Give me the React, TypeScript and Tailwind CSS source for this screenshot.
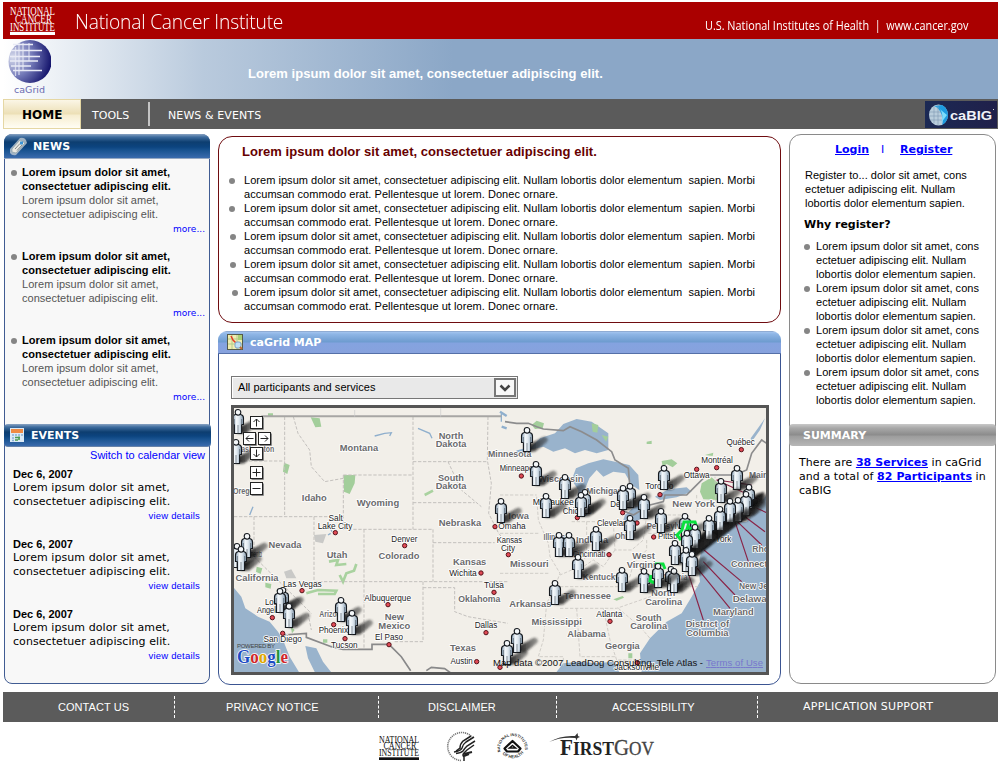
import type { ReactNode } from 'react';

const ARIAL = "font-['Liberation_Sans',sans-serif]";
const VERDANA = "font-['DejaVu_Sans',sans-serif]";

function Bullet({ className = '' }: { className?: string }) {
  return <span className={`block size-[6px] shrink-0 rounded-full bg-[#858585] ${className}`} />;
}

function NciMark({ color, className }: { color: string; className: string }) {
  return (
    <svg className={`overflow-visible ${className}`} viewBox="0 0 45 28" preserveAspectRatio="none" fill={color}>
      <g fontFamily="Liberation Serif, serif" fontSize="12.500">
        <text x="0" y="8.500" textLength="45" lengthAdjust="spacingAndGlyphs">NATIONAL</text>
        <text x="5" y="16.200" textLength="37" lengthAdjust="spacingAndGlyphs">CANCER</text>
        <text x="0" y="24" textLength="45" lengthAdjust="spacingAndGlyphs">INSTITUTE</text>
      </g>
      <rect x="0" y="25" width="45" height="3" />
    </svg>
  );
}

function Header() {
  return (
    <header className="flex h-[37px] items-center bg-[#aa0000] text-white">
      <NciMark color="#fff" className="ml-[7px] h-[29px] w-[45px]" />
      <div className="mt-[2px] ml-5 w-[400px] origin-left scale-x-[0.96] font-['Open_Sans',sans-serif] text-[20px] leading-[36px] font-light tracking-[-0.2px]">
        National Cancer Institute
      </div>
      <div className="mt-[10px] ml-[230px] origin-left scale-x-[0.903] font-['Open_Sans',sans-serif] text-[12px] leading-[18px] whitespace-pre">
        U.S. National Institutes of Health  |  www.cancer.gov
      </div>
    </header>
  );
}

function GridLogo() {
  return (
    <svg className="h-[60px] w-[48px]" viewBox="0 0 48 60">
      <defs>
        <radialGradient id="globe" cx=".1" cy=".4" r=".9">
          <stop offset="0" stopColor="#d5daeb" />
          <stop offset=".5" stopColor="#757bb9" />
          <stop offset="1" stopColor="#14146c" />
        </radialGradient>
      </defs>
      <circle cx="27" cy="22.500" r="21.500" fill="url(#globe)" />
      <g stroke="#e9ebf6" strokeWidth="1.300">
        <path d="M10 5.500H30M8 11.500H39M7 17.500H37M7 22H35M8 27H28M10 31.500H39" />
        <path d="M12.500 8V37M16 4V36M20 4V31M26 4V22" opacity=".75" />
      </g>
      <text x="11" y="54" textLength="31" fontFamily="DejaVu Sans, sans-serif" fontSize="9.500" fill="#6a6bb0">caGrid</text>
    </svg>
  );
}

function Banner() {
  return (
    <div className="flex h-[60px] bg-[linear-gradient(90deg,#fff_0,#b9cadd_200px,#8ba7c7_450px)]">
      <GridLogo />
      <div className={`mt-[26px] ml-[197px] ${ARIAL} text-[13px] leading-[18px] font-bold tracking-[0.04px] whitespace-nowrap text-white`}>
        Lorem ipsum dolor sit amet, consectetuer adipiscing elit.
      </div>
    </div>
  );
}

function CaBig() {
  return (
    <svg className="mt-[2px] mr-px ml-auto h-[27px] w-[72px]" viewBox="0 0 72 27">
      <defs>
        <linearGradient id="cb"><stop offset="0" stopColor="#1b2954" /><stop offset="1" stopColor="#20204a" /></linearGradient>
      </defs>
      <rect width="72" height="27" fill="url(#cb)" />
      <ellipse cx="13.500" cy="14" rx="9.500" ry="10.500" fill="#b9cddc" />
      <path d="M9 5C15 7 20 17 17 24C25 20 25 8 17 4Z" fill="#1e9be0" />
      <path d="M11 5C17 8 19 15 16 22L22 14Z" fill="#7ddcfa" />
      <path d="M4 11H16M4 15H17M5 19H17M9 6V22M13 4V24" stroke="#7e99b2" strokeWidth=".6" fill="none" />
      <text x="25" y="18.500" textLength="42" lengthAdjust="spacingAndGlyphs" fontFamily="Liberation Sans, sans-serif" fontWeight="bold" fontSize="13" fill="#f0f2f8">caBIG</text>
      <rect x="68" y="8" width="1" height="1" fill="#ddd" />
    </svg>
  );
}

function Nav() {
  return (
    <nav className={`flex h-[30px] bg-[#5b5b5b] ${VERDANA} text-[11px] leading-[33px] text-white`}>
      <div className="w-[78px] border border-[#e5d7a4] bg-[linear-gradient(180deg,#fbf6e6_0,#ecdfb5_14px,#f6edcf_15px,#fffdf4_28px)] pl-[18px] text-[12px] leading-[30px] font-bold text-black">
        HOME
      </div>
      <div className="w-[67px] pl-[11px]">TOOLS</div>
      <div className="mt-[3px] h-[24px] w-[2px] bg-[#c4c4c4]" />
      <div className="pl-[18px] tracking-[0.1px] whitespace-nowrap">NEWS &amp; EVENTS</div>
      <CaBig />
    </nav>
  );
}

function NewsItem() {
  return (
    <div className="mb-[13px]">
      <div className="flex">
        <Bullet className="mt-[5px] mr-[5px]" />
        <div className="tracking-[0.03px] whitespace-nowrap text-[#555]">
          <b className="text-black">
            Lorem ipsum dolor sit amet,
            <br />
            consectetuer adipiscing elit.
          </b>
          <br />
          Lorem ipsum dolor sit amet,
          <br />
          consectetuer adipiscing elit.
        </div>
      </div>
      <div className={`mt-px pr-[4px] text-right ${VERDANA} text-[9px] leading-[14px] text-[#00f]`}>more...</div>
    </div>
  );
}

function EventItem() {
  return (
    <div className="mb-[14px] pr-[9px] pl-2">
      <b className={ARIAL}>Dec 6, 2007</b>
      <div className={`${VERDANA} tracking-[0.07px] whitespace-nowrap`}>
        Lorem ipsum dolor sit amet,
        <br />
        consectetuer adipiscing elit.
      </div>
      <div className="text-right text-[9.5px] tracking-[0.2px] text-[#00f]">view details</div>
    </div>
  );
}

function LeftColumn() {
  return (
    <aside className={`mt-[5px] h-[550px] w-[206px] rounded-[8px] border border-[#415c93] bg-[#f8f8f8] ${ARIAL} text-[11px] leading-[14px] text-black`}>
      <h2 className={`-mx-px -mt-px flex h-[25px] items-center rounded-t-[8px] border-b border-[#97a9c2] bg-[linear-gradient(180deg,#8aa4c3_0,#3f6d9f_3px,#0d3e70_8px,#0c447f_13px,#18528f_16px,#3a6bad_24px)] ${VERDANA} font-bold text-white`}>
        <svg className="ml-[5px] size-[19px]" viewBox="0 0 19 19">
          <path d="M1 12L11 1Q15 0 17 3L18 6L7 18Q3 19 1 16Z" fill="#c0cbd2" opacity=".8" />
          <path d="M3 12L11 3L16 6L7 16L3 15Z" fill="#ebe9e2" stroke="#8ba0a8" strokeWidth=".7" />
          <path d="M6 12L11 6.500M8 13.500L13 8" stroke="#858c8c" />
          <rect x="11" y="4.500" width="3" height="3" fill="#3c94d6" />
        </svg>
        <span className="mt-px ml-[5px] tracking-[0.1px]">NEWS</span>
      </h2>
      <div className="h-[265px] pt-[6px] pl-[6px]">
        <NewsItem />
        <NewsItem />
        <NewsItem />
      </div>
      <h2 className={`-mr-[2px] -ml-px flex h-[23px] items-center rounded-[4px] border-b border-[#6682a9] bg-[linear-gradient(180deg,#8aa4c3_0,#3f6d9f_3px,#0d3e70_8px,#0c447f_12px,#18528f_15px,#3a6bad_22px)] ${VERDANA} font-bold text-white`}>
        <svg className="ml-[6px] size-[14px]" viewBox="0 0 14 14">
          <rect width="14" height="14" fill="#dceaf6" />
          <rect x="1" y="1" width="12" height="4" fill="#ef8b43" />
          <path d="M2 7H4M5 7H7M8 7H10M11 7H13M2 10H4M2 12.500H4" stroke="#8ab1d3" strokeWidth="1.500" />
          <path d="M5 9.500H10M5 12H8M9 8.500V12" stroke="#4b9c4f" strokeWidth="1.600" />
        </svg>
        <span className="mt-px ml-[7px]">EVENTS</span>
      </h2>
      <div className="mt-[1px] pr-[4px] text-right text-[#00f]">Switch to calendar view</div>
      <div className="pt-[5px]">
        <EventItem />
        <EventItem />
        <EventItem />
      </div>
    </aside>
  );
}

const introOffsets = ['ml-[10px]', 'ml-[10px]', 'ml-[11px]', 'ml-[11px]', 'ml-[13px]'];
const introGaps = ['mr-[9px]', 'mr-[9px]', 'mr-[8px]', 'mr-[8px]', 'mr-[6px]'];

function Intro() {
  return (
    <section className="h-[187px] rounded-[14px] border border-[#6f0c10]">
      <h1 className="pt-[6px] pl-[23px] text-[13px] leading-[18px] font-bold tracking-[0.04px] text-[#660000]">
        Lorem ipsum dolor sit amet, consectetuer adipiscing elit.
      </h1>
      <ul className="mt-[12px] text-[11px] leading-[14px] tracking-[0.04px]">
        {introOffsets.map((offset, i) => (
          <li key={i} className="flex whitespace-pre">
            <Bullet className={`mt-[5px] ${offset} ${introGaps[i]}`} />
            <span>
              Lorem ipsum dolor sit amet, consectetuer adipiscing elit. Nullam lobortis dolor elementum{'  '}sapien. Morbi
              <br />
              accumsan commodo erat. Pellentesque ut lorem. Donec ornare.
            </span>
          </li>
        ))}
      </ul>
    </section>
  );
}

const people: [number, number][] = [
  [238, 409], [236, 439], [237, 543], [247, 533], [241, 546], [283, 587], [280, 588], [289, 603],
  [341, 597], [352, 610], [501, 498], [527, 427], [536, 461], [565, 474], [546, 493], [585, 489],
  [581, 492], [630, 483], [623, 485], [644, 494], [664, 465], [661, 508], [630, 515], [596, 526],
  [559, 532], [569, 532], [578, 554], [555, 580], [622, 567], [644, 568], [671, 566], [674, 568],
  [675, 540], [737, 465], [721, 478], [749, 484], [746, 491], [738, 497], [730, 498],
  [720, 506], [709, 515], [685, 513], [517, 628], [507, 640],
];
const frontPeople: [number, number][] = [[695, 524], [687, 530], [658, 563], [686, 547], [692, 551]];

function Person({ x, y }: { x: number; y: number }) {
  return (
    <g transform={`translate(${x} ${y})`}>
      <path d="M-1 24.500H8L15 19L21 14Q21 9 16 10L11 13L3 17Z" fill="url(#shade)" filter="url(#soft)" />
      <path d="M-2.500 5.500Q-5.500 6-5.500 9V15.500H-3.600V24.500H3.600V15.500H5.500V9Q5.500 6 2.500 5.500Z" fill="url(#body)" stroke="#15191e" strokeWidth="1.100" />
      <circle cx="0" cy="3.300" r="2.800" fill="#f4f7f9" stroke="#15191e" strokeWidth="1.100" />
      <path d="M0 16V24.500M-3.600 10V16M3.600 10V16" stroke="#56626d" strokeWidth=".7" />
    </g>
  );
}

type Label = [number, number, string, number?];

const westStates: Label[] = [
  [393, 152, 'Montana', 115], [669, 116, 'North', 74], [669, 142, 'Dakota', 92], [669, 242, 'South', 78],
  [669, 268, 'Dakota', 92], [259, 304, 'Idaho', 75], [450, 318, 'Wyoming', 127], [696, 378, 'Nebraska', 127],
  [171, 443, 'Nevada', 99], [327, 473, 'Utah', 62], [513, 477, 'Colorado', 123], [725, 494, 'Kansas', 100],
  [87, 543, 'California', 129], [754, 607, 'Oklahoma', 126], [499, 660, 'New', 58], [499, 686, 'Mexico', 96],
  [705, 752, 'Texas', 78], [312, 651, 'Arizona', 76], [80, 157, 'Washington', 118], [53, 283, 'Oregon', 76],
];
const westCities: Label[] = [
  [323, 363, 'Salt', 43], [321, 387, 'Lake City', 104], [529, 426, 'Denver', 78], [705, 527, 'Wichita', 83],
  [798, 563, 'Tulsa', 60], [223, 560, 'Las Vegas', 116], [479, 602, 'Albuquerque', 140], [316, 700, 'Phoenix', 88],
  [349, 745, 'Tucson', 80], [483, 721, 'El Paso', 84], [774, 684, 'Dallas', 68], [701, 792, 'Austin', 67],
  [164, 726, 'San Diego', 115], [130, 615, 'Los', 38], [127, 640, 'Angeles', 80], [67, 470, 'Sacramento', 70],
];
const eastStates: Label[] = [
  [29, 170, 'Minnesota', 130], [182, 247, 'Wisconsin', 135], [314, 282, 'Michigan', 110], [56, 358, 'Iowa', 62],
  [163, 420, 'Illinois', 65], [276, 428, 'Indiana', 96], [370, 418, 'Ohio', 52], [581, 320, 'New York', 128],
  [515, 388, 'Pennsylvania', 150], [88, 502, 'Missouri', 116], [431, 477, 'West', 68], [431, 503, 'Virginia', 102],
  [304, 541, 'Kentucky', 112], [527, 541, 'Virginia', 70], [262, 597, 'Tennessee', 142], [490, 589, 'North', 72],
  [491, 615, 'Carolina', 111], [91, 622, 'Arkansas', 126], [170, 674, 'Mississippi', 151], [260, 711, 'Alabama', 116],
  [367, 747, 'Georgia', 104], [446, 662, 'South', 77], [446, 688, 'Carolina', 111], [783, 233, 'Maine', 72],
  [797, 456, 'Rhode', 80], [772, 501, 'Connecticut', 158], [786, 568, 'New Jersey', 138], [763, 606, 'Delaware', 130],
  [700, 644, 'Maryland', 122], [622, 682, 'District of', 130], [622, 709, 'Columbia', 127],
];
const eastCities: Label[] = [
  [722, 134, 'Québec', 85], [651, 189, 'Montréal', 95], [590, 234, 'Ottawa', 78], [478, 267, 'Toronto', 84],
  [60, 212, 'Minneapolis', 122], [160, 316, 'Milwaukee', 123], [231, 341, 'Chicago', 86], [366, 322, 'Detroit', 70],
  [343, 377, 'Cleveland', 104], [527, 417, 'Pittsburgh', 106], [36, 387, 'Omaha', 82], [28, 429, 'Kansas', 76],
  [24, 453, 'City', 42], [267, 471, 'Cincinnati', 98], [328, 650, 'Atlanta', 78], [670, 426, 'York', 48],
  [410, 810, 'Jacksonville', 135],
];
const westDots = [[322, 398], [530, 437], [759, 519], [798, 577], [222, 572], [480, 614], [317, 674], [351, 716], [483, 734], [774, 698], [746, 785], [164, 700], [133, 653], [801, 380], [816, 802]];
const eastDots = [[724, 149], [650, 203], [590, 208], [480, 284], [64, 228], [232, 353], [368, 338], [411, 369], [461, 411], [25, 464], [327, 464], [330, 664], [412, 788]];

function Labels({ items, state }: { items: Label[]; state?: boolean }) {
  return (
    <g
      fontFamily="Liberation Sans, sans-serif"
      fontSize={state ? 28 : 25}
      fontWeight={state ? 'bold' : 'normal'}
      fill={state ? '#6a6a6c' : '#1c1c1c'}
      stroke="#fff"
      strokeWidth="5"
      strokeLinejoin="round"
      paintOrder="stroke"
      textAnchor="middle"
    >
      {items.map(([x, y, text, w], i) => (
        <text key={i} x={x} y={y} textLength={w} lengthAdjust="spacingAndGlyphs">{text}</text>
      ))}
    </g>
  );
}

function Dots({ at }: { at: number[][] }) {
  return (
    <g fill="#e04a55" stroke="#551018" strokeWidth="3">
      {at.map(([x, y], i) => <circle key={i} cx={x} cy={y} r="6.500" />)}
    </g>
  );
}

function MapControl({ x, y, d }: { x: number; y: number; d: string }) {
  return (
    <g transform={`translate(${x} ${y})`} fill="none">
      <rect x=".5" y=".5" width="12" height="12" fill="#fff" stroke="#222" />
      <path d="M1.500 13.500H13.500V1.500" stroke="#888" />
      <path d={d} stroke="#222" />
    </g>
  );
}

function UsMap() {
  return (
    <svg className="h-[270px] w-[538px]" viewBox="231 405 538 270">
      <defs>
        <linearGradient id="body">
          <stop offset="0" stopColor="#7f97ad" /><stop offset=".35" stopColor="#f4f8fb" /><stop offset=".6" stopColor="#dfe8ef" /><stop offset="1" stopColor="#8096ab" />
        </linearGradient>
        <linearGradient id="shade"><stop offset="0" stopColor="#000" stopOpacity=".95" /><stop offset="1" stopColor="#333" stopOpacity=".45" /></linearGradient>
        <filter id="soft" x="-30%" y="-30%" width="160%" height="160%"><feGaussianBlur stdDeviation=".8" /></filter>
      </defs>
      <rect x="231" y="405" width="539" height="270" fill="#f2efe9" />

      <g transform="translate(228 400) scale(.33333)">
        <path d="M15 560L40 590L52 625L90 650L125 665L150 695L165 720L185 770L215 820H15ZM232 738L265 745L285 785L312 820H262L240 775Z" fill="#99b3cc" />
        <path d="M248 52L275 55L280 80L262 82ZM168 188L185 195L178 222L165 215ZM347 225H382L380 250L365 282L348 275ZM86 500L103 505L98 522L84 515ZM112 548L130 552L128 566L112 562ZM145 570L170 560L175 590L155 585ZM120 40H135V50H120ZM188 680L200 690L192 700ZM285 718H298V728H285Z" fill="#a3ce9b" />
        <path d="M303 485L330 480L325 495L355 492M335 525L345 545L355 520L378 512L385 492M235 580L270 570L325 572L320 582L270 582M590 285L615 272" fill="none" stroke="#a9d29f" strokeWidth="8" />
        <path d="M258 405L295 402L285 430L262 425ZM168 515L190 508L205 535L175 535Z" fill="#c9c9c7" />
        <path d="M293 375L305 380L312 395M440 108L470 100L490 98L485 108M570 85L605 100L612 115M300 405L308 400M75 320L65 345M820 42V65" fill="none" stroke="#8fafcd" strokeWidth="4" />
        <g fill="none" stroke="#c3c0bd" strokeWidth="3" strokeDasharray="10 5">
          <path d="M170 50V348M18 183H170M18 350H346M78 350V470L250 640M258 350V545M346 225V388M346 225H555M555 50V388M346 388H615M408 388V750M555 185H780M555 308H740M615 388V545M615 428H800M258 545H840M585 545V725M585 563H680V635L720 650L810 665L840 670M500 725H585M196 50L210 100L245 150L250 200L290 245L346 235M780 50L778 180L790 250L782 340L812 400L838 430M660 185L700 270L760 320M240 640L250 690" />
        </g>
        <path d="M100 49H820" stroke="#a7a6a4" strokeWidth="6" />
        <path d="M165 705L235 700V712L310 740L345 748H432V733H483L520 770L548 812M595 812L610 802L650 806L670 820" stroke="#89898a" strokeWidth="5" fill="none" />
        <path d="M380 30V50M638 25V50" stroke="#ccc" strokeWidth="2" />
        <Labels items={westStates} state />
        <Labels items={westCities} />
        <Dots at={westDots} />
      </g>

      <g transform="translate(500 400) scale(.33333)">
        <path d="M85 150L120 115L165 100L190 72L230 57L275 65L325 100L325 150L290 160L255 150L225 160L195 145L160 155L130 140ZM228 205L265 190L310 178L345 185L388 195L415 225L418 270L395 255L375 220L340 215L310 230L290 210L268 235L248 285L256 320L240 345L230 310L235 270L215 240ZM375 345L405 318L452 318L430 355L395 368L370 360ZM465 290L505 268L560 262L575 275L530 292L480 300ZM800 286L768 320L740 365L690 370L640 410L605 445L595 500L600 545L575 590L545 640L500 665L450 715L420 760L425 820H800ZM752 115L795 55L780 90L755 125ZM170 815L190 790L240 785L290 790L340 785L360 820H170Z" fill="#99b3cc" />
        <path d="M95 75L110 62L132 70L128 85L105 87ZM275 70L295 75L292 98L278 95ZM305 105L325 110L318 125ZM485 183L515 178L532 190L518 202L500 192L488 200ZM605 250L635 232L655 250L675 280L658 300L610 298L600 275ZM340 598L368 588L372 593L350 602ZM385 760H397V775H385ZM440 125L455 122V132H440ZM615 165L640 158L638 168Z" fill="#a3ce9b" />
        <path d="M15 65L50 70L85 70L110 80L130 87L190 92L210 80L245 95L290 120L335 155L345 180L385 205L390 265L365 330L400 345L450 315L490 305L495 285L560 285L585 260L620 225L705 225L740 210L755 160L785 120L800 130" stroke="#8c8c8d" strokeWidth="5" fill="none" />
        <g fill="none" stroke="#cac6c2" strokeWidth="2.500" strokeDasharray="10 5">
          <path d="M110 290L115 360L145 430L150 470L180 520L165 560L140 610L130 720L115 770L190 770V800M0 400H120M0 285H110M215 365H290M260 365V470L215 510L180 525M340 370L345 450L395 450L430 420L440 345L550 345M445 400H550M0 520H150M150 560H600M180 625H350L480 580M230 625L240 770H350M310 625L330 720L350 780H420M355 625L420 680L450 715M345 450L310 500L280 480L220 520M440 420V450L400 490L390 530L350 550M590 340V280M650 370L645 230M690 350V260" />
        </g>
        <path d="M0 35L20 48M5 80L20 85M50 155L70 150" stroke="#8fafcd" strokeWidth="7" />
        <path d="M800 338L760 320M795 395L735 350M785 435L712 365M745 485L705 365M725 545L612 450M705 585L610 485M690 625L580 490M610 660L565 520M755 255L650 240L780 300" stroke="#8a2447" strokeWidth="3.500" fill="none" />
        <Labels items={eastStates} state />
        <Labels items={eastCities} />
        <Dots at={eastDots} />
      </g>

      <path d="M684 553L700 535L712 524L738 510L757 494L764 492L763 502L746 518L720 538L704 551L695 558Z" fill="#080808" opacity=".92" filter="url(#soft)" />
      {people.map(([x, y], i) => <Person key={i} x={x} y={y} />)}
      <path d="M681 540L677 535L682 530L684 522L695 522L697 528L694 533L688 526L684 538M651 575L650 581L655 583M655 564L663 564L665 569" fill="none" stroke="#0be03f" strokeWidth="3" />
      {frontPeople.map(([x, y], i) => <Person key={i} x={x} y={y} />)}

      <MapControl x={250} y={416} d="M6.500 10.500V3M3.500 6L6.500 3L9.500 6" />
      <MapControl x={243} y={432} d="M10.500 6.500H3M6 3.500L3 6.500L6 9.500" />
      <MapControl x={258} y={432} d="M2.500 6.500H10M7 3.500L10 6.500L7 9.500" />
      <MapControl x={250} y={447} d="M6.500 2.500V10M3.500 7L6.500 10L9.500 7" />
      <MapControl x={250} y={466} d="M6.500 2.500V10.500M2.500 6.500H10.500" />
      <MapControl x={250} y={482} d="M2.500 6.500H10.500" />

      <text x="237" y="648" textLength="38" fontFamily="Liberation Sans, sans-serif" fontSize="6" fill="#444">POWERED BY</text>
      <text x="237" y="663" textLength="51" lengthAdjust="spacingAndGlyphs" fontFamily="Liberation Serif, serif" fontSize="19" fontWeight="bold" stroke="#fff" strokeWidth="1.500" paintOrder="stroke">
        <tspan fill="#1c4bc4">G</tspan><tspan fill="#d0262c">o</tspan><tspan fill="#e0a800">o</tspan><tspan fill="#1c4bc4">g</tspan><tspan fill="#24933d">l</tspan><tspan fill="#d0262c">e</tspan>
      </text>
      <g fontFamily="Liberation Sans, sans-serif" fontSize="9.500">
        <text x="493" y="666" textLength="210" fill="#111">Map data ©2007 LeadDog Consulting, Tele Atlas -</text>
        <text x="706" y="666" textLength="57" fill="#7777cc" textDecoration="underline">Terms of Use</text>
      </g>
      <rect x="232.500" y="406.500" width="535" height="267" fill="none" stroke="#555" strokeWidth="3" />
    </svg>
  );
}

function MapPanel() {
  return (
    <section className="mt-2 h-[354px] rounded-[12px] border border-[#3b5592]">
      <h2 className={`-mx-px -mt-px flex h-[23px] items-center rounded-t-[9px] border-b border-[#5570a8] bg-[linear-gradient(180deg,#7b93b9_0,#a3c4ee_1px,#8fb6e6_3px,#6d9bcf_11px,#84a3e0_12px,#87a2dd_22px)] ${VERDANA} text-[11px] font-bold text-white`}>
        <svg className="ml-[9px] size-4" viewBox="0 0 16 16">
          <rect x=".5" y=".5" width="15" height="15" fill="#f0edb0" stroke="#555b49" />
          <path d="M1 5H15M1 10H15M5 1V15M10 1V15" stroke="#b5cc8c" />
          <rect x="11" y="1" width="4" height="5" fill="#a8cf75" />
          <path d="M4 2L6 6L9 9" stroke="#e43a26" strokeWidth="1.500" fill="none" />
          <rect x="8" y="8" width="6" height="6" rx="2" fill="#bfe0f5" stroke="#7aa2cc" />
          <path d="M13 13L15 15" stroke="#c06a35" strokeWidth="2" />
        </svg>
        <span className="mt-[2px] ml-[7px]">caGrid MAP</span>
      </h2>
      <div className="mt-[22px] ml-3 flex h-[23px] w-[287px] items-center justify-between border border-[#777] bg-[#e9e9e9] pr-px pl-[6px] text-[11px] tracking-[0.04px] shadow-[inset_1px_1px_0_#fff]">
        <span>All participants and services</span>
        <span className="flex h-[19px] w-[22px] items-center justify-center border-2 border-[#777] bg-[#f8f8f8]">
          <svg className="h-[8px] w-[12px]" viewBox="0 0 12 8"><path d="M1.500 1.500L6 6L10.500 1.500" stroke="#444" strokeWidth="2.500" fill="none" /></svg>
        </span>
      </div>
      <div className="mt-[6px] ml-3"><UsMap /></div>
    </section>
  );
}

function Anchor({ children }: { children: ReactNode }) {
  return <a className="font-bold text-[#00f] underline">{children}</a>;
}

function RightColumn() {
  return (
    <aside className={`mt-[5px] ml-2 h-[550px] w-[207px] rounded-[12px] border border-[#8a8a8a] ${ARIAL} text-[11px] leading-[14px]`}>
      <div className={`flex pt-[8px] pl-[45px] ${VERDANA}`}>
        <Anchor>Login</Anchor>
        <span className="ml-[12px] w-[19px] text-[#00f]">I</span>
        <Anchor>Register</Anchor>
      </div>
      <p className="mt-[11px] pl-[15px] tracking-[0.03px] whitespace-nowrap">
        Register to... dolor sit amet, cons
        <br />
        ectetuer adipiscing elit. Nullam
        <br />
        lobortis dolor elementum sapien.
      </p>
      <h3 className={`mt-[8px] pl-[14px] ${VERDANA} font-bold`}>Why register?</h3>
      <ul className="mt-[7px] h-[185px] pl-[14px] tracking-[0.03px]">
        {[0, 1, 2, 3].map((i) => (
          <li key={i} className="flex whitespace-nowrap">
            <Bullet className="mt-[5px] mr-[6px]" />
            <span>
              Lorem ipsum dolor sit amet, cons
              <br />
              ectetuer adipiscing elit. Nullam
              <br />
              lobortis dolor elementum sapien.
            </span>
          </li>
        ))}
      </ul>
      <h2 className={`-mx-px h-[22px] rounded-[4px] bg-[linear-gradient(180deg,#c9c9c9_0,#a9a9a9_4px,#8b8b8b_11px,#9c9c9c_12px,#b7b7b7_22px)] pl-[14px] ${VERDANA} leading-[23px] font-bold text-white`}>
        SUMMARY
      </h2>
      <p className={`mt-[10px] pl-[9px] ${VERDANA} tracking-[0.06px] whitespace-nowrap`}>
        There are <Anchor>38 Services</Anchor> in caGrid
        <br />
        and a total of <Anchor>82 Participants</Anchor> in
        <br />
        caBIG
      </p>
    </aside>
  );
}

function FooterLogos() {
  return (
    <div className="flex h-[46px] items-start pl-[376px]">
      <NciMark color="#111" className="mt-[13px] h-[25px] w-[40px]" />
      <svg className="mt-[9px] ml-[26px] h-[31px] w-[31px]" viewBox="0 0 31 31" fill="none" stroke="#222">
        <path d="M16 29.500A14 14 0 1 1 27 6" strokeWidth="1.600" strokeDasharray="1.200 .8" stroke="#777" />
        <path d="M29 6L21 11Q18 13 17 17Q16 20 9 21M30 10L22 15Q20 17 18 20Q16 22 11 22.500M29 14L22 19L19 22Q17 24 19 26L19 30M26 5L18 10Q15 13 15 17L11 20" strokeWidth="1.500" />
        <path d="M19 23L27 21M19 25L24 23" strokeWidth="2" />
      </svg>
      <svg className="mt-[9px] ml-[21px] h-[31px] w-[31px] overflow-visible" viewBox="0 0 31 31" fill="none">
        <defs>
          <path id="ringTop" d="M3.500 21A12.500 12.500 0 1 1 27.500 21" />
          <path id="ringBottom" d="M4 21.500A14.500 14.500 0 0 0 27 21.500" />
        </defs>
        <g fontFamily="Liberation Sans, sans-serif" fontSize="4.200" fontWeight="bold" fill="#333">
          <text fontSize="3.900"><textPath href="#ringTop">NATIONAL INSTITUTES</textPath></text>
          <text><textPath href="#ringBottom" startOffset="2">OF HEALTH</textPath></text>
        </g>
        <path d="M15.500 10L23.500 17.500L21 20.500H10L7.500 17.500Z" stroke="#111" strokeWidth="2.200" strokeLinejoin="round" />
        <path d="M15.500 14.500L18.500 17H12.500Z" stroke="#111" strokeWidth="1.600" />
      </svg>
      <svg className="mt-[9px] ml-[21px] h-[28px] w-[106px] overflow-visible" viewBox="0 0 106 28">
        <path d="M0 11Q12 4 26 5L28.500 2L29 5L31 6L28.500 7L27.500 9.500L26.500 7Q12 5.500 0 11Z" fill="#333" />
        <g fontFamily="Liberation Serif, serif" fill="#222">
          <text x="11" y="23.500" fontWeight="bold" textLength="54" lengthAdjust="spacingAndGlyphs" fontSize="19"><tspan fontSize="23">F</tspan>IRST</text>
          <text x="65" y="23.500" textLength="40" lengthAdjust="spacingAndGlyphs" fontSize="19" fill="#444" stroke="#444" strokeWidth=".3"><tspan fontSize="23">G</tspan>OV</text>
        </g>
      </svg>
    </div>
  );
}

function Footer() {
  return (
    <footer>
      <div className={`flex h-[30px] items-center bg-[#5b5b5b] ${ARIAL} text-[11px] leading-[28px] tracking-[0.06px] whitespace-nowrap text-white`}>
        <span className="w-[171px] pl-[55px]">CONTACT US</span>
        <i className="h-[22px] border-l border-dashed border-white" />
        <span className="w-[203px] pl-[51px]">PRIVACY NOTICE</span>
        <i className="h-[22px] border-l border-dashed border-white" />
        <span className="w-[177px] pl-[49px]">DISCLAIMER</span>
        <i className="h-[22px] border-l border-dashed border-white" />
        <span className="w-[200px] pl-[55px]">ACCESSIBILITY</span>
        <i className="h-[22px] border-l border-dashed border-white" />
        <span className={`pl-[45px] ${VERDANA} tracking-[0.25px]`}>APPLICATION SUPPORT</span>
      </div>
      <FooterLogos />
    </footer>
  );
}

export default function App() {
  return (
    <div className={`h-[768px] w-[1000px] overflow-hidden bg-white pt-[2px] pr-[2px] pl-[3px] ${ARIAL} text-black`}>
      <Header />
      <Banner />
      <Nav />
      <main className="flex h-[563px] pl-px">
        <LeftColumn />
        <div className="ml-2 w-[563px] pt-[7px]">
          <Intro />
          <MapPanel />
        </div>
        <RightColumn />
      </main>
      <Footer />
    </div>
  );
}
